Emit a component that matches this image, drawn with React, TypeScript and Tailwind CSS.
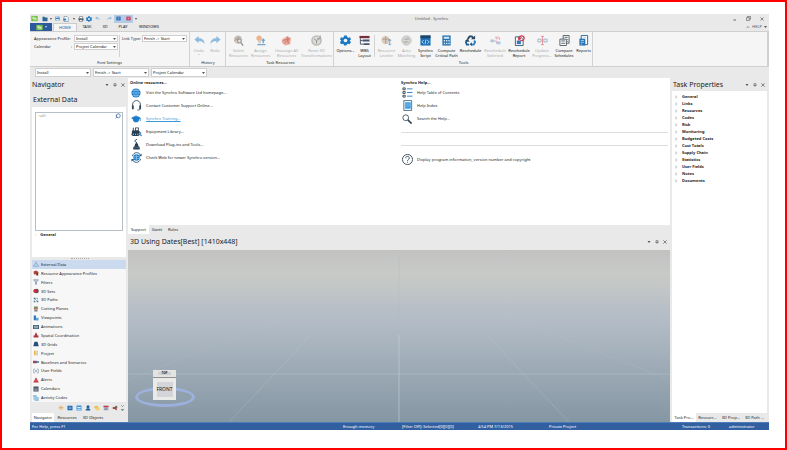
import type { ReactNode } from "react";
import { clsx } from "clsx";
import { ChevronUp, GraduationCap, Search } from "lucide-react";

type IconProps = { className?: string; children: ReactNode; box?: string };

const Icon = ({ className, children, box = "0 0 24 24" }: IconProps) => (
  <svg viewBox={box} className={clsx("shrink-0", className)} fill="none" aria-hidden="true">
    {children}
  </svg>
);

const Caret = ({ className = "size-[3px] text-[#555]" }: { className?: string }) => (
  <Icon box="0 0 6 4" className={className}>
    <path d="M0 0h6L3 4z" fill="currentColor" />
  </Icon>
);

const icons: Record<string, ReactNode> = {
  logo: (
    <>
      <path d="M1 3h22v18H1z" fill="#72c043" />
      <path d="M4 8h8M4 12h16M12 16h8M10 5v14M15 8v8" stroke="#e8f8dc" strokeWidth="2" />
    </>
  ),
  folder: <path d="M2 3h8l2 3h10v15H2z" fill="#2f6697" />,
  save: (
    <>
      <path d="M2 2h17l3 3v17H2z" fill="#3a7fb9" />
      <path d="M6 2h11v8H6zM6 14h12v8H6z" fill="#eef5fa" />
      <path d="M12 3h3v5h-3z" fill="#3a7fb9" />
    </>
  ),
  doc: (
    <>
      <path d="M4 2h12l5 5v15H4z" stroke="#526b80" strokeWidth="2" fill="#fff" />
      <path d="M1 10h12v8H1z" fill="#3882bd" />
    </>
  ),
  print: (
    <>
      <path d="M2 9h20v9H2z" fill="#46535f" />
      <path d="M6 2h12v8H6zM6 15h12v7H6z" fill="#fff" stroke="#46535f" strokeWidth="2" />
    </>
  ),
  gear: (
    <>
      <path
        d="M9 1h6l1 4 2 1 4-1 2 5-3 2 3 3-3 5-4-1-2 1-1 3H9l-1-3-2-1-4 1-2-5 3-3-3-2 2-5 4 1 2-1z"
        fill="#1b78c2"
      />
      <circle cx="12" cy="12" r="4" fill="#f5f5f5" />
    </>
  ),
  undo: <path d="M1 10 10 2v5c8 0 13 4 13 13-3-5-6-7-13-7v5z" fill="#8dbbe0" />,
  redo: <path d="M23 10 14 2v5C6 7 1 11 1 20c3-5 6-7 13-7v5z" fill="#8dbbe0" />,
  blueTable: (
    <>
      <path d="M2 3h20v18H2z" fill="#1c5fae" />
      <path d="M5 9h14M5 14h14M12 6v12" stroke="#9cc9f1" strokeWidth="2" />
    </>
  ),
  redTable: (
    <>
      <path d="M2 3h20v18H2z" fill="#c9284f" />
      <path d="M5 9h14M5 14h14M12 6v12" stroke="#f4b1c3" strokeWidth="2" />
    </>
  ),
  select: (
    <>
      <circle cx="11" cy="10" r="9" fill="#cfc5ba" />
      <path d="m5 6 12 8M11 2v16M3 12l14-7" stroke="#a69f98" strokeWidth="2" />
      <circle cx="14" cy="13" r="4" fill="#e6e3df" stroke="#8c9296" strokeWidth="2" />
      <path d="m17 16 5 7" stroke="#8c9296" strokeWidth="3" />
    </>
  ),
  assign: (
    <>
      <circle cx="9" cy="7" r="6" fill="#eeb28c" />
      <path d="M7 12h6v6H7z" fill="#d9cdc3" />
      <path d="M18 9v9M15 13l3-4 3 4M5 21h18" stroke="#73a9d5" strokeWidth="3" />
    </>
  ),
  unassign: (
    <>
      <path d="M2 10 14 2l8 5-2 13-11 3-7-6z" fill="#e9aa9b" />
      <path d="m5 12 13-4M7 18 18 9M14 4l2 15" stroke="#c9746b" strokeWidth="2" />
    </>
  ),
  reset: (
    <>
      <circle cx="12" cy="12" r="10" fill="#dbdad5" stroke="#b4b8b5" strokeWidth="3" />
      <path d="m7 9 5 3 5-3M12 12v7M20 1v7h-6" stroke="#8c9390" strokeWidth="2" />
    </>
  ),
  wbs: (
    <>
      <path d="M1 2h22v5H1z" fill="#7a2d3a" />
      <path d="M8 10h15v4H8zM10 18h13v4H10z" fill="#46536d" />
      <path d="M3 7v13h7M3 12h5" stroke="#46536d" strokeWidth="2" />
    </>
  ),
  leveler: (
    <>
      <circle cx="10" cy="11" r="9" fill="#dccabc" />
      <path d="M3 9h14M10 3v16" stroke="#a79b91" strokeWidth="2" />
      <path d="M19 9v13M16 13l3-4 3 4M16 19l3 3 3-3" stroke="#6e9fca" strokeWidth="2" />
    </>
  ),
  matching: (
    <>
      <circle cx="12" cy="12" r="10" fill="#d8d8d3" stroke="#b9bdba" strokeWidth="2" />
      <path d="M7 9h10l-3-3M17 15H7l3 3" stroke="#9da3a1" strokeWidth="2" />
    </>
  ),
  script: (
    <>
      <path d="M1 1h22v22H1z" fill="#1c6fb7" />
      <path d="M1 1h22v6H1z" fill="#24455f" />
      <path d="m8 11-4 4 4 4M16 11l4 4-4 4M13 10l-2 10" stroke="#b8dcf8" strokeWidth="2" />
    </>
  ),
  calc: (
    <>
      <path d="M3 1h18v22H3z" fill="#2072b5" />
      <path
        d="M6 4h12v4H6zM6 11h3v3H6zM11 11h3v3h-3zM16 11h3v3h-3zM6 17h3v3H6zM11 17h3v3h-3zM16 17h3v3h-3z"
        fill="#d8ebf9"
      />
    </>
  ),
  reschedule: (
    <>
      <path d="m6 9 4-6h5l3 4" stroke="#294a66" strokeWidth="4" />
      <path d="m20 12 2 4-3 5h-5" stroke="#2b7fc5" strokeWidth="4" />
      <path d="M9 21H4l-2-5 3-5" stroke="#1a5d9b" strokeWidth="4" />
      <path d="M13 9h9V1zM15 16v8l-5-4zM0 13l6-5 4 7z" fill="#294a66" />
    </>
  ),
  rescheduleSel: (
    <>
      <path d="M1 10h8v6H1zM14 14h9v6h-9z" fill="#a9cae6" />
      <path d="M9 13h5v4M14 7c3-6 10-2 6 4M13 3v5h5" stroke="#eda0aa" strokeWidth="2" />
    </>
  ),
  rescheduleRep: (
    <>
      <path d="M3 4h11l6 6v13H3z" fill="#fff" stroke="#33597b" strokeWidth="2" />
      <path d="M6 12h9v8H6z" fill="#3179b8" />
      <path d="M11 8c0-8 12-8 11 0-1 4-5 5-8 4M9 5l2 5 4-3" stroke="#d23c50" strokeWidth="3" />
    </>
  ),
  progress: (
    <>
      <path d="M2 9h7v6H2zM15 9h7v6h-7z" stroke="#9bb0c2" strokeWidth="2" />
      <path d="M12 2v20M9 3h6M9 21h6" stroke="#e48c97" strokeWidth="2" />
    </>
  ),
  compare: (
    <>
      <path d="M9 1h13v17H9z" fill="#fff" stroke="#4a565f" strokeWidth="2" />
      <path d="M2 9h14v14H2z" fill="#fff" stroke="#4a565f" strokeWidth="2" />
      <path d="M12 5h7M5 13h8M5 18h8M18 10h2M18 14h2" stroke="#4a565f" strokeWidth="2" />
    </>
  ),
  report: (
    <>
      <path d="M7 1h14v20H7z" fill="#fff" stroke="#2d5f8a" strokeWidth="2" />
      <path d="M3 8h13v15H3z" fill="#2876b5" />
      <path d="M10 5h8M6 12h7M6 16h7M6 20h3" stroke="#a8cbe6" strokeWidth="2" />
    </>
  ),
  globe: (
    <>
      <circle cx="12" cy="12" r="11" fill="#1b7ccb" />
      <path
        d="M1 12h22M3 6h18M3 18h18M12 1v22M12 1c-7 6-7 16 0 22M12 1c7 6 7 16 0 22"
        stroke="#b9ddf6"
        strokeWidth="1"
      />
    </>
  ),
  headset: (
    <>
      <path d="M4 14C0-3 24-3 20 14M20 18c0 3-3 4-6 4" stroke="#33475a" strokeWidth="2" />
      <path d="M2 12h4v8H2zM18 12h4v8h-4z" fill="#33475a" />
    </>
  ),
  dozer: (
    <>
      <path d="M2 10h2V4h2v6h3V3h8v8h2v4H2z" fill="#263f55" />
      <path d="M11 5h4v4h-4z" fill="#fff" />
      <rect x="1" y="14" width="18" height="8" rx="4" fill="#263f55" />
      <path d="M4 18h2M9 18h2M14 18h2" stroke="#fff" strokeWidth="2" />
      <path d="M21 13v8h3" stroke="#2f7dba" strokeWidth="2" />
    </>
  ),
  plug: (
    <>
      <path d="M9 10h6l1 5 3 3v5H5v-5l3-3z" fill="#263f55" />
      <path d="M12 11V7c-5 0-4-6 1-6" stroke="#263f55" strokeWidth="2" />
      <path d="M6 18h12" stroke="#8497a6" strokeWidth="1" />
    </>
  ),
  webCheck: (
    <>
      <circle cx="12" cy="12" r="7" fill="#2380ca" />
      <path d="M3 9C6-1 18-1 21 8M21 15c-3 10-15 10-18 1" stroke="#28506f" strokeWidth="2" />
      <path d="M17 9h6V3zM7 15H1v6z" fill="#28506f" />
      <path d="M7 10h10M7 14h10M12 6v12" stroke="#b9ddf6" strokeWidth="1" />
    </>
  ),
  contents: (
    <>
      <path d="M2 2h5v4H2zM2 10h5v4H2zM2 18h5v4H2z" stroke="#33475a" strokeWidth="2" />
      <path d="M11 4h12M11 12h12M11 20h12" stroke="#2b7fc5" strokeWidth="2" />
    </>
  ),
  index: (
    <>
      <path d="M4 1h17v22H4z" fill="#eaf4fc" stroke="#4a7291" strokeWidth="2" />
      <path d="M7 5h12v14H7z" fill="#3c9be0" />
      <path d="M9 9h8M9 13h8" stroke="#b8def8" strokeWidth="1" />
    </>
  ),
  magnifier: (
    <>
      <circle cx="9" cy="9" r="7" stroke="#33475a" strokeWidth="2" />
      <path d="m14 14 9 9" stroke="#33475a" strokeWidth="4" />
    </>
  ),
  help: (
    <>
      <circle cx="12" cy="12" r="11" stroke="#33475a" strokeWidth="2" />
      <path d="M8 9c0-5 8-5 8 0 0 3-4 3-4 6M12 17v2" stroke="#33475a" strokeWidth="2" />
    </>
  ),
  external: <path d="M12 2v11M8 9l4 4 4-4M6 13l-4 8h20l-4-8" stroke="#4486bd" strokeWidth="2" />,
  appearance: (
    <>
      <path d="M2 6 13 2l9 6-4 12-7-3-7 1z" fill="#b44237" />
      <path d="M13 11h8v11h-8z" fill="#703a35" />
    </>
  ),
  filter: <path d="M2 3h20l-8 9v9h-4v-9z" fill="#c3d5e4" stroke="#4f6f8b" strokeWidth="2" />,
  sets: (
    <>
      <circle cx="14" cy="12" r="9" fill="#3b5268" />
      <circle cx="9" cy="12" r="8" fill="#c6303c" />
    </>
  ),
  paths: (
    <>
      <path d="M3 3h6v6H3zM15 15h6v6h-6zM3 15h6v6H3z" fill="#3c7294" />
      <path d="m7 7 11 11M9 5h9v5" stroke="#3c7294" strokeWidth="2" />
    </>
  ),
  planes: (
    <>
      <path d="M4 2h15v9H4z" fill="#6c8c55" />
      <path d="M2 10h20l-4 4H5z" fill="#c85345" />
      <path d="M5 15h13v7H5z" fill="#79838a" />
    </>
  ),
  view: (
    <>
      <path d="M3 2h9v19H3z" fill="#2d79bb" />
      <path d="M11 11h11v11H11z" fill="#56a6dc" />
    </>
  ),
  anim: (
    <>
      <path d="M0 4h24v16H0z" fill="#456477" />
      <path d="M6 7h4v10H6zM14 7h4v10h-4z" fill="#d8eaf2" />
    </>
  ),
  spatial: (
    <>
      <path d="m12 1 7 14H5z" fill="#a93648" />
      <path d="M2 14h20v8H2z" fill="#c0384a" />
      <path d="M9 14h6v5H9z" fill="#5b3f49" />
    </>
  ),
  grids: <path d="M6 3h12l5 18H1z" fill="#264f78" />,
  project: (
    <>
      <path d="M4 3h7v18H4z" fill="#e7b951" />
      <path d="M13 2h7v20h-7z" fill="#d9cfa9" />
    </>
  ),
  baseline: (
    <>
      <path d="M0 7h15v10H0z" fill="#a43e63" />
      <path d="M12 9h12v6H12z" fill="#3e6e9c" />
    </>
  ),
  fields: <path d="M8 4H3v16h5M16 4h5v16h-5M8 12h8M12 7v10" stroke="#547993" strokeWidth="2" />,
  alert: (
    <>
      <path d="m12 1 11 21H1z" fill="#cf3044" />
      <path d="M12 10v5M12 17v2" stroke="#f3b9c0" strokeWidth="2" />
    </>
  ),
  calendar: (
    <>
      <path d="M2 2h20v20H2z" fill="#3f4d59" />
      <path d="M5 9h14M5 14h14M5 18h14" stroke="#c1c8cd" strokeWidth="2" />
    </>
  ),
  codes: (
    <>
      <path d="M1 4h14M9 12h14M9 20h14" stroke="#3a8fcb" strokeWidth="4" />
      <path d="M4 5v15h5M4 12h5" stroke="#3a8fcb" strokeWidth="2" />
    </>
  ),
  palette: (
    <>
      <path d="M3 5 12 2l9 4 1 8-10 8L2 14z" fill="#ecd1a5" />
      <path d="M6 8h4v5H6zM14 8h4v5h-4z" fill="#c59761" />
    </>
  ),
  window: (
    <>
      <path d="M2 2h20v20H2z" fill="#3a96dc" />
      <path d="M5 8h14v4H5zM5 15h14v4H5z" fill="#dceefa" />
    </>
  ),
  user: (
    <>
      <circle cx="12" cy="7" r="6" fill="#1f5f9c" />
      <path d="M3 22v-5l6-4h6l6 4v5z" fill="#1f5f9c" />
    </>
  ),
  coins: (
    <>
      <ellipse cx="9" cy="9" rx="8" ry="6" fill="#f0bf4c" />
      <ellipse cx="15" cy="16" rx="8" ry="6" fill="#f5cf70" />
    </>
  ),
  date: (
    <>
      <path d="M2 3h20v19H2z" fill="#c4cdd6" />
      <path d="M2 3h20v6H2z" fill="#c23846" />
      <path d="M5 13h14M5 18h14" stroke="#44576a" strokeWidth="2" />
    </>
  ),
  horn: (
    <>
      <path d="M3 8h7l9-6v20l-9-6H3z" fill="#a14a3e" />
      <path d="M14 5h7v6h-7z" fill="#4f6f57" />
    </>
  ),
};

const Glyph = ({ name, className = "size-[6px]" }: { name: string; className?: string }) => (
  <Icon className={className}>{icons[name]}</Icon>
);

const Combo = ({ id, value, className }: { id: string; value: string; className?: string }) => (
  <span className={clsx("relative flex items-center border border-[#cfcfcf] bg-white", className)}>
    <select
      id={id}
      aria-label={id}
      className="h-full w-full appearance-none bg-transparent pl-px text-[4px] leading-[5px] text-[#111] outline-none"
    >
      <option>{value}</option>
    </select>
    <Caret className="pointer-events-none absolute right-px h-[2px] w-[3px] text-[#555]" />
  </span>
);

type Tool = { label: string[]; icon: string; width: string; off?: boolean; drop?: boolean };

const history: Tool[] = [
  { label: ["Undo"], icon: "undo", width: "w-4", off: true, drop: true },
  { label: ["Redo"], icon: "redo", width: "w-4", off: true },
];

const resources: Tool[] = [
  { label: ["Select", "Resources"], icon: "select", width: "w-[21px]", off: true },
  { label: ["Assign", "Resources"], icon: "assign", width: "w-[23px]", off: true },
  { label: ["Unassign All", "Resources"], icon: "unassign", width: "w-[29px]", off: true },
  { label: ["Reset 3D", "Transformations"], icon: "reset", width: "w-[31px]", off: true },
];

const toolsLeft: Tool[] = [
  { label: ["Options..."], icon: "gear", width: "w-[21px]" },
  { label: ["WBS", "Layout"], icon: "wbs", width: "w-[17px]" },
];

const toolsRight: Tool[] = [
  { label: ["Resource", "Leveler"], icon: "leveler", width: "w-[21px]", off: true },
  { label: ["Auto", "Matching"], icon: "matching", width: "w-[19px]", off: true },
  { label: ["Synchro", "Script"], icon: "script", width: "w-[19px]" },
  { label: ["Compute", "Critical Path"], icon: "calc", width: "w-[23px]" },
  { label: ["Reschedule"], icon: "reschedule", width: "w-[25px]" },
  { label: ["Reschedule", "Selected"], icon: "rescheduleSel", width: "w-6", off: true },
  { label: ["Reschedule", "Report"], icon: "rescheduleRep", width: "w-6" },
  { label: ["Update", "Progress..."], icon: "progress", width: "w-[22px]", off: true },
  { label: ["Compare", "Schedules"], icon: "compare", width: "w-[22px]" },
  { label: ["Reports"], icon: "report", width: "w-[17px]" },
];

const ToolButton = ({ label, icon, width, off, drop }: Tool) => (
  <button
    type="button"
    disabled={off}
    className={clsx(
      "flex shrink-0 flex-col items-center whitespace-nowrap leading-[5px]",
      width,
      off ? "text-[#adadad]" : "text-[#111]",
    )}
  >
    <Glyph name={icon} className="mb-[2px] size-[11px]" />
    {label.map((line) => (
      <span key={line}>{line}</span>
    ))}
    {drop && <Caret className="mt-px h-px w-[2px] text-[#aaa]" />}
  </button>
);

const RibbonGroup = ({ title, className, children }: { title: string; className?: string; children: ReactNode }) => (
  <section className={clsx("flex shrink-0 flex-col border-r border-[#d2d2d2] pt-[3px] pb-px", className)}>
    <div className="flex flex-1 items-start">{children}</div>
    <h3 className="text-center leading-[5px]">{title}</h3>
  </section>
);

const PaneButtons = () => (
  <div className="flex items-center gap-1 text-[#555]">
    <button type="button" aria-label="Menu">
      <Caret className="h-[2px] w-[4px]" />
    </button>
    <button type="button" aria-label="Pin">
      <Icon className="size-[4px]">
        <path d="M6 3h12v11H6zM2 14h20M12 14v9" stroke="currentColor" strokeWidth="3" />
      </Icon>
    </button>
    <button type="button" aria-label="Close">
      <Icon className="size-[4px]">
        <path d="m2 2 20 20M22 2 2 22" stroke="currentColor" strokeWidth="4" />
      </Icon>
    </button>
  </div>
);

const PaneTabs = ({ tabs }: { tabs: { label: string; width: string }[] }) => (
  <div className="flex h-[9px] shrink-0 bg-[#e9e9e9]">
    {tabs.map(({ label, width }, i) => (
      <button key={label} type="button" className={clsx("whitespace-nowrap", width, i === 0 && "bg-white")}>
        {label}
      </button>
    ))}
  </div>
);

const navItems = [
  ["External Data", "external"],
  ["Resource Appearance Profiles", "appearance"],
  ["Filters", "filter"],
  ["3D Sets", "sets"],
  ["3D Paths", "paths"],
  ["Cutting Planes", "planes"],
  ["Viewpoints", "view"],
  ["Animations", "anim"],
  ["Spatial Coordination", "spatial"],
  ["3D Grids", "grids"],
  ["Project", "project"],
  ["Baselines and Scenarios", "baseline"],
  ["User Fields", "fields"],
  ["Alerts", "alert"],
  ["Calendars", "calendar"],
  ["Activity Codes", "codes"],
];

const properties = [
  "General",
  "Links",
  "Resources",
  "Codes",
  "Risk",
  "Monitoring",
  "Budgeted Costs",
  "Cost Totals",
  "Supply Chain",
  "Statistics",
  "User Fields",
  "Notes",
  "Documents",
];

const onlineLinks = [
  { label: "Visit the Synchro Software Ltd homepage...", icon: <Glyph name="globe" className="size-[10px]" /> },
  { label: "Contact Customer Support Online...", icon: <Glyph name="headset" className="size-[11px]" /> },
  {
    label: "Synchro Training...",
    icon: <GraduationCap className="size-[10px] fill-[#1b7ccb] text-[#1b7ccb]" />,
    active: true,
  },
  { label: "Equipment Library...", icon: <Glyph name="dozer" className="size-[11px]" /> },
  { label: "Download Plug-ins and Tools...", icon: <Glyph name="plug" className="size-[11px]" /> },
  { label: "Check Web for newer Synchro version...", icon: <Glyph name="webCheck" className="size-[11px]" /> },
];

const helpLinks = [
  { label: "Help Table of Contents", icon: <Glyph name="contents" className="size-[11px]" /> },
  { label: "Help Index", icon: <Glyph name="index" className="size-[11px]" /> },
  { label: "Search the Help...", icon: <Glyph name="magnifier" className="size-[10px]" /> },
];

const ResourceLink = ({ label, icon, active }: { label: string; icon: ReactNode; active?: boolean }) => (
  <a href="#" className={clsx("flex h-[11px] items-center gap-1", active && "text-[#3a97d8]")}>
    <span className="flex w-3 justify-center">{icon}</span>
    <span className={clsx(active && "underline")}>{label}</span>
  </a>
);

const TitleBar = () => (
  <header className="grid h-[9px] grid-cols-[1fr_auto_1fr] items-center pr-[5px]">
    <div className="flex items-center">
      <Glyph name="logo" className="ml-px size-[7px]" />
      <Glyph name="folder" className="ml-1 size-[6px]" />
      <Caret className="ml-[2px] size-[2px]" />
      <Glyph name="save" className="ml-[3px] size-[5px]" />
      <Glyph name="doc" className="ml-[3px] size-[6px]" />
      <Caret className="ml-1 size-[2px]" />
      <Glyph name="print" className="ml-[3px] size-[6px]" />
      <Glyph name="gear" className="ml-[2px] size-[6px]" />
      <Glyph name="undo" className="ml-[3px] size-[5px]" />
      <Glyph name="redo" className="ml-[7px] size-[5px]" />
      <span className="ml-[2px] flex h-[8px] w-[19px] items-center justify-around bg-[#b4cbe6]">
        <Glyph name="blueTable" className="size-[5px]" />
        <Glyph name="redTable" className="size-[5px]" />
      </span>
      <Caret className="ml-[2px] size-[2px]" />
    </div>
    <h1 className="pl-[69px] text-[#555]">Untitled - Synchro</h1>
    <div className="flex items-center justify-end gap-[9px] text-[#555]">
      <button type="button" aria-label="Minimize">
        <Icon className="size-[4px]">
          <path d="M2 18h16" stroke="currentColor" strokeWidth="5" />
        </Icon>
      </button>
      <button type="button" aria-label="Restore">
        <Icon className="size-[5px]">
          <path d="M7 7V2h15v13h-6M2 8h14v14H2z" stroke="currentColor" strokeWidth="3" />
        </Icon>
      </button>
      <button type="button" aria-label="Close window">
        <Icon className="size-[4px]">
          <path d="m3 3 18 18M21 3 3 21" stroke="currentColor" strokeWidth="4" />
        </Icon>
      </button>
    </div>
  </header>
);

const menuTabs = [
  { label: "HOME", width: "w-6" },
  { label: "TASK", width: "w-5" },
  { label: "3D", width: "w-4" },
  { label: "PLAY", width: "w-5" },
  { label: "WINDOWS", width: "w-8" },
];

const MenuBar = () => (
  <nav className="flex h-2 items-stretch">
    <button type="button" aria-label="File" className="flex w-[22px] items-center justify-center gap-[2px] bg-[#2d5a9e]">
      <Glyph name="logo" className="size-[7px]" />
      <Caret className="size-[2px] text-white" />
    </button>
    {menuTabs.map(({ label, width }, i) => (
      <button
        key={label}
        type="button"
        className={clsx(width, i === 0 && "ml-px border border-b-0 border-[#ccc] bg-[#f5f5f5] text-[#2d5a9e]")}
      >
        {label}
      </button>
    ))}
    <button type="button" className="ml-auto flex items-center gap-[2px] pr-[2px] text-[#555]">
      <ChevronUp className="size-[4px]" strokeWidth={4} />
      HELP
      <Caret className="h-[2px] w-[3px]" />
    </button>
  </nav>
);

const Ribbon = () => (
  <div className="flex h-[36px] border-y border-[#cfcfcf] bg-[#f5f5f5]">
    <RibbonGroup title="Font Settings" className="w-[160px]">
      <div className="grid grid-cols-[40px_44px] items-center gap-y-px pl-1">
        <label htmlFor="Appearance profile" className="whitespace-nowrap">
          Appearance Profile:
        </label>
        <Combo id="Appearance profile" value="Install" className="h-[7px]" />
        <label htmlFor="Calendar" className="flex justify-between pr-[2px]">
          Calendar <span>:</span>
        </label>
        <Combo id="Calendar" value="Project Calendar" className="h-[7px]" />
      </div>
      <div className="ml-px flex h-[22px] items-start border-l border-[#d2d2d2] pl-[2px]">
        <label htmlFor="Link type" className="w-5 whitespace-nowrap leading-[7px]">
          Link Type:
        </label>
        <Combo id="Link type" value="Finish -> Start" className="h-[7px] w-[45px]" />
      </div>
    </RibbonGroup>
    <RibbonGroup title="History" className="w-9 pl-px">
      {history.map((t) => (
        <ToolButton key={t.icon} {...t} />
      ))}
    </RibbonGroup>
    <RibbonGroup title="Task Resources" className="w-[108px] pl-[2px]">
      {resources.map((t) => (
        <ToolButton key={t.icon} {...t} />
      ))}
    </RibbonGroup>
    <RibbonGroup title="Tools" className="w-[259px] pl-px">
      {toolsLeft.map((t) => (
        <ToolButton key={t.icon} {...t} />
      ))}
      <span className="mx-px h-[22px] w-px bg-[#d2d2d2]" />
      {toolsRight.map((t) => (
        <ToolButton key={t.icon} {...t} />
      ))}
    </RibbonGroup>
    <span className="ml-auto w-[2px] bg-[#cfcfcf]" />
  </div>
);

const Navigator = () => (
  <aside className="flex w-[98px] shrink-0 flex-col pl-[2px]">
    <div className="flex h-[14px] items-center justify-between pr-[3px]">
      <h2 className="text-[7px] leading-[8px]">Navigator</h2>
      <PaneButtons />
    </div>
    <h2 className="h-[15px] pl-px text-[7px] leading-[15px]">External Data</h2>
    <div className="mr-[2px] flex h-[150px] flex-col bg-white px-[3px] pt-[5px]">
      <div className="flex h-[119px] items-start justify-between border border-[#b5bfc8] px-px">
        <input
          aria-label="Path filter"
          placeholder="<all>"
          className="w-16 pl-px text-[4px] leading-[6px] outline-none placeholder:text-[#888]"
        />
        <Search className="size-[6px] -scale-x-100 text-[#3f6ea0]" strokeWidth={3} />
      </div>
      <button type="button" className="mt-px flex items-center gap-1 font-bold leading-[5px]">
        <span className="font-normal text-[#999]">›</span>
        General
      </button>
    </div>
    <div className="mx-auto my-px h-px w-[18px] border-t border-dotted border-[#aaa]" />
    <ul className="mr-[2px] flex flex-1 flex-col bg-[#f7f7f7]">
      {navItems.map(([label, icon], i) => (
        <li key={label} className="flex flex-1">
          <button
            type="button"
            className={clsx("flex w-full items-center gap-[2px] pl-px leading-[5px]", i === 0 && "bg-[#cbdaee]")}
          >
            <Glyph name={icon} />
            {label}
          </button>
        </li>
      ))}
    </ul>
    <div className="flex h-[11px] items-center justify-end gap-[3px] pr-1">
      {["palette", "blueTable", "window", "user", "coins", "date", "horn"].map((name) => (
        <button key={name} type="button" aria-label={name}>
          <Glyph name={name} />
        </button>
      ))}
      <button type="button" aria-label="More">
        <Icon box="0 0 8 16" className="h-[6px] w-[3px]">
          <path d="m1 1 3 3 3-3M1 12h6l-3 3z" stroke="#666" strokeWidth="2" />
        </Icon>
      </button>
    </div>
    <PaneTabs
      tabs={[
        { label: "Navigator", width: "w-[22px]" },
        { label: "Resources", width: "w-[26px]" },
        { label: "3D Objects", width: "w-[26px]" },
      ]}
    />
  </aside>
);

const SupportPage = () => (
  <section className="grid h-[147px] grid-cols-2 bg-white">
    <div className="pt-[2px] pl-[2px]">
      <h3 className="font-bold leading-[5px]">Online resources...</h3>
      <div className="mt-[2px] flex flex-col gap-[2px]">
        {onlineLinks.map((link) => (
          <ResourceLink key={link.label} {...link} />
        ))}
      </div>
    </div>
    <div className="pt-[2px] pr-[2px] pl-[2px]">
      <h3 className="font-bold leading-[5px]">Synchro Help...</h3>
      <div className="mt-[2px] flex flex-col gap-[2px]">
        {helpLinks.map((link) => (
          <ResourceLink key={link.label} {...link} />
        ))}
      </div>
      <hr className="mt-2 border-[#ddd]" />
      <hr className="mt-3 mb-2 border-[#ddd]" />
      <ResourceLink
        label="Display program information, version number and copyright"
        icon={<Glyph name="help" className="size-[11px]" />}
      />
    </div>
  </section>
);

const Viewport = () => (
  <div className="relative flex-1 bg-linear-to-b from-[#c2c2c0] via-[#b4bdc7] via-40% to-[#8597a3]">
    <svg
      viewBox="0 0 542 172"
      preserveAspectRatio="none"
      className="absolute inset-0 h-full w-full"
      fill="none"
      aria-hidden="true"
    >
      <defs>
        <linearGradient id="haze" x1="0" y1="0" x2="0" y2="1">
          <stop offset="0" stopColor="#cdcfcb" stopOpacity="0" />
          <stop offset="0.4" stopColor="#cbccc9" stopOpacity="0.8" />
          <stop offset="1" stopColor="#cdcfcb" stopOpacity="0" />
        </linearGradient>
      </defs>
      <rect width="542" height="60" fill="url(#haze)" />
      <path d="M0 124h542" stroke="#b9c8cd" strokeOpacity="0.4" />
      <path d="M271 85v87" stroke="#c5d3d6" strokeOpacity="0.6" />
      <path d="M271 5v80" stroke="#b5b8ba" strokeOpacity="0.4" />
      <path d="m359 85 82 87M183 85l-82 87" stroke="#c5d3d6" strokeOpacity="0.25" />
      <path d="m390 70 152 60M152 70 0 130" stroke="#c5d3d6" strokeOpacity="0.12" />
    </svg>
    <div className="absolute bottom-[15px] left-[7px] h-5 w-[60px] rounded-[50%] border-[3px] border-[#a0b5ea]/80" />
    <div className="absolute bottom-[22px] left-[25px] flex w-[23px] flex-col gap-px bg-[#8f9291]">
      <button type="button" className="flex h-[7px] items-center justify-center bg-[#e3e3e0]">
        <span className="bg-[#cfd0d1] px-1 text-[3px] leading-[3px] font-bold">TOP</span>
      </button>
      <button type="button" className="flex h-[22px] items-center justify-center bg-[#eaeae8]">
        <span className="flex h-[15px] w-4 items-center justify-center bg-[#d3d5da] text-[5px]">FRONT</span>
      </button>
    </div>
  </div>
);

const TaskProperties = () => (
  <aside className="flex w-[99px] shrink-0 flex-col px-[2px]">
    <div className="flex h-[13px] items-center justify-between pr-[2px] pl-px">
      <h2 className="text-[7px] leading-[8px]">Task Properties</h2>
      <PaneButtons />
    </div>
    <ul className="flex-1 bg-white pt-[2px] pl-[3px]">
      {properties.map((name) => (
        <li key={name} className="flex h-[7px] items-center gap-1 font-bold leading-[7px]">
          <Icon box="0 0 4 6" className="h-[4px] w-[3px]">
            <path d="M1 1v4l2-2z" stroke="#bbb" strokeWidth="1" />
          </Icon>
          {name}
        </li>
      ))}
    </ul>
    <PaneTabs
      tabs={[
        { label: "Task Pro...", width: "w-6" },
        { label: "Resourc...", width: "w-[23px]" },
        { label: "3D Prop...", width: "w-6" },
        { label: "3D Path ...", width: "w-[23px]" },
      ]}
    />
  </aside>
);

const StatusBar = () => (
  <footer className="grid h-2 grid-cols-[313fr_59fr_75fr_72fr_133fr_47fr_40fr] items-center border-t border-[#4d7db8] bg-[#315f9f] whitespace-nowrap text-white">
    <span className="pl-[2px]">For Help, press F1</span>
    <span>Enough memory</span>
    <span>[Filter Off]: Selected[0][0][0]</span>
    <span className="pl-px">4:54 PM 7/13/2015</span>
    <span>Private Project</span>
    <span>Transactions: 0</span>
    <span>administrator</span>
  </footer>
);

export default function App() {
  return (
    <div className="flex min-h-screen flex-col border-2 border-[#f00] bg-white pt-3 pr-4 pb-[18px] pl-7 font-['Noto_Sans','Open_Sans',sans-serif] text-[4px] leading-[6px] text-[#1c1c1c]">
      <div className="flex flex-1 flex-col bg-[#e9e9e9]">
        <TitleBar />
        <MenuBar />
        <Ribbon />
        <div className="flex h-[11px] items-center gap-[2px] pl-[5px]">
          <Combo id="Profile" value="Install" className="h-[9px] w-[56px]" />
          <Combo id="Link" value="Finish -> Start" className="h-[9px] w-[56px]" />
          <Combo id="Project calendar" value="Project Calendar" className="h-[9px] w-[56px]" />
        </div>
        <div className="flex flex-1">
          <Navigator />
          <main className="flex min-w-0 flex-1 flex-col">
            <SupportPage />
            <PaneTabs
              tabs={[
                { label: "Support", width: "w-[21px]" },
                { label: "Gantt", width: "w-4" },
                { label: "Rules", width: "w-4" },
              ]}
            />
            <div className="flex h-4 items-center justify-between pr-[3px] pl-[2px]">
              <h2 className="text-[7px] leading-[8px]">3D Using Dates[Best] [1410x448]</h2>
              <PaneButtons />
            </div>
            <Viewport />
          </main>
          <TaskProperties />
        </div>
        <StatusBar />
      </div>
    </div>
  );
}
